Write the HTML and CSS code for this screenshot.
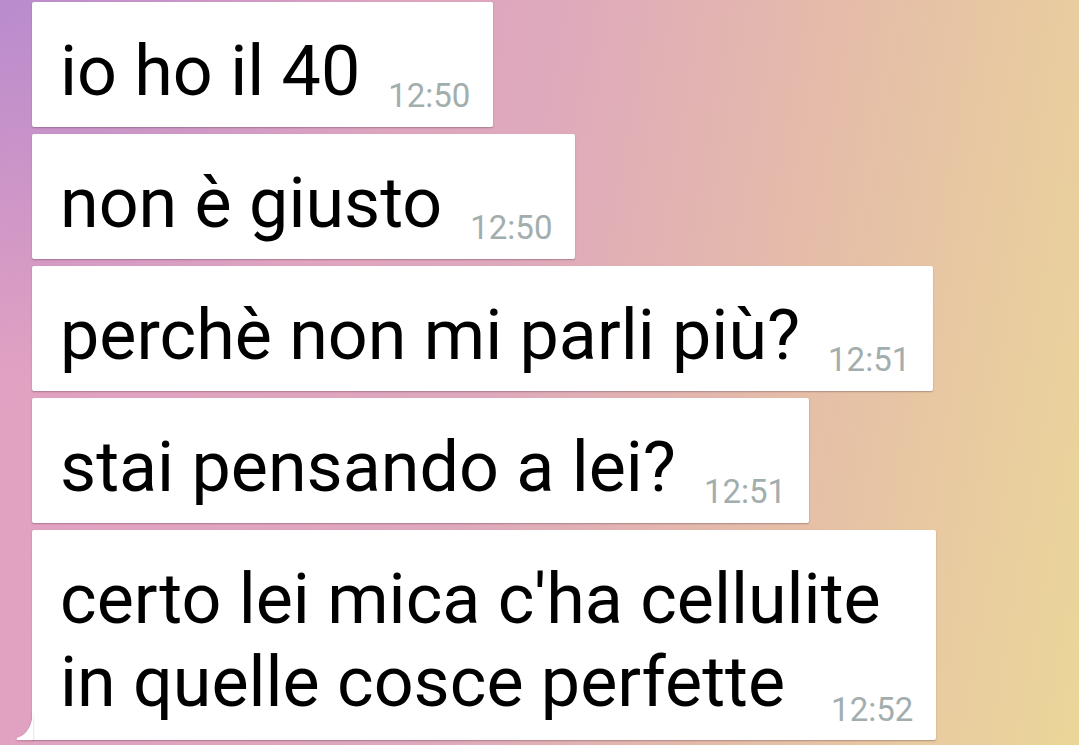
FILE: index.html
```html
<!DOCTYPE html>
<html lang="it">

<head>
    <meta charset="UTF-8">
    <title>Chat</title>
    <link rel="stylesheet" href="styles.css">
</head>

<body>
    <div class="chat">
        <div class="bubble">
            <span class="text">io ho il 40</span><span class="time">12:50</span>
        </div>
        <div class="bubble">
            <span class="text">non è giusto</span><span class="time">12:50</span>
        </div>
        <div class="bubble">
            <span class="text">perchè non mi parli più?</span><span class="time">12:51</span>
        </div>
        <div class="bubble">
            <span class="text">stai pensando a lei?</span><span class="time">12:51</span>
        </div>
        <div class="bubble last">
            <span class="text">certo lei mica c'ha cellulite<br>in quelle cosce perfette</span><span class="time wide">12:52</span>
            <!-- coda del fumetto -->
            <svg class="tail" width="17" height="32" viewBox="0 0 17 32">
                <path d="M17 0 C17 16 12 26 2 29.5 C0 30.2 0.3 32 2 32 L17 32 Z" fill="#ffffff" />
            </svg>
        </div>
    </div>
</body>

</html>
```

FILE: styles.css
```css
html,
body {
    margin: 0;
    height: 100%;
}

body {
    font-family: Roboto, "Noto Sans", Arial, sans-serif;
    background:
        radial-gradient(ellipse 420px 380px at 0 0, rgba(183, 138, 206, 0.95), rgba(183, 138, 206, 0) 100%),
        linear-gradient(100deg, #e2a0c2 0%, #dea8bd 45%, #e5bca9 70%, #ebd699 100%);
    overflow: hidden;
}

.chat {
    display: flex;
    flex-direction: column;
    align-items: flex-start;
    gap: 7px;
    padding: 2px 0 0 32px;
}

.bubble {
    position: relative;
    background: #ffffff;
    border-radius: 2px;
    box-shadow: 0 1px 1.5px rgba(80, 40, 60, 0.35);
    padding: 28px 23px 14px 28px;
    font-size: 70px;
    line-height: 83px;
    color: #000;
    white-space: nowrap;
}

.time {
    display: inline-block;
    margin-left: 28px;
    font-size: 33px;
    line-height: 1;
    color: #a2aeae;
    vertical-align: -12px;
}

.time.wide {
    margin-left: 46px;
    vertical-align: -15px;
}

.last {
    border-bottom-left-radius: 0;
}

.tail {
    position: absolute;
    left: -16px;
    bottom: 0;
    filter: drop-shadow(0 1px 0.8px rgba(80, 40, 60, 0.3));
}
```
